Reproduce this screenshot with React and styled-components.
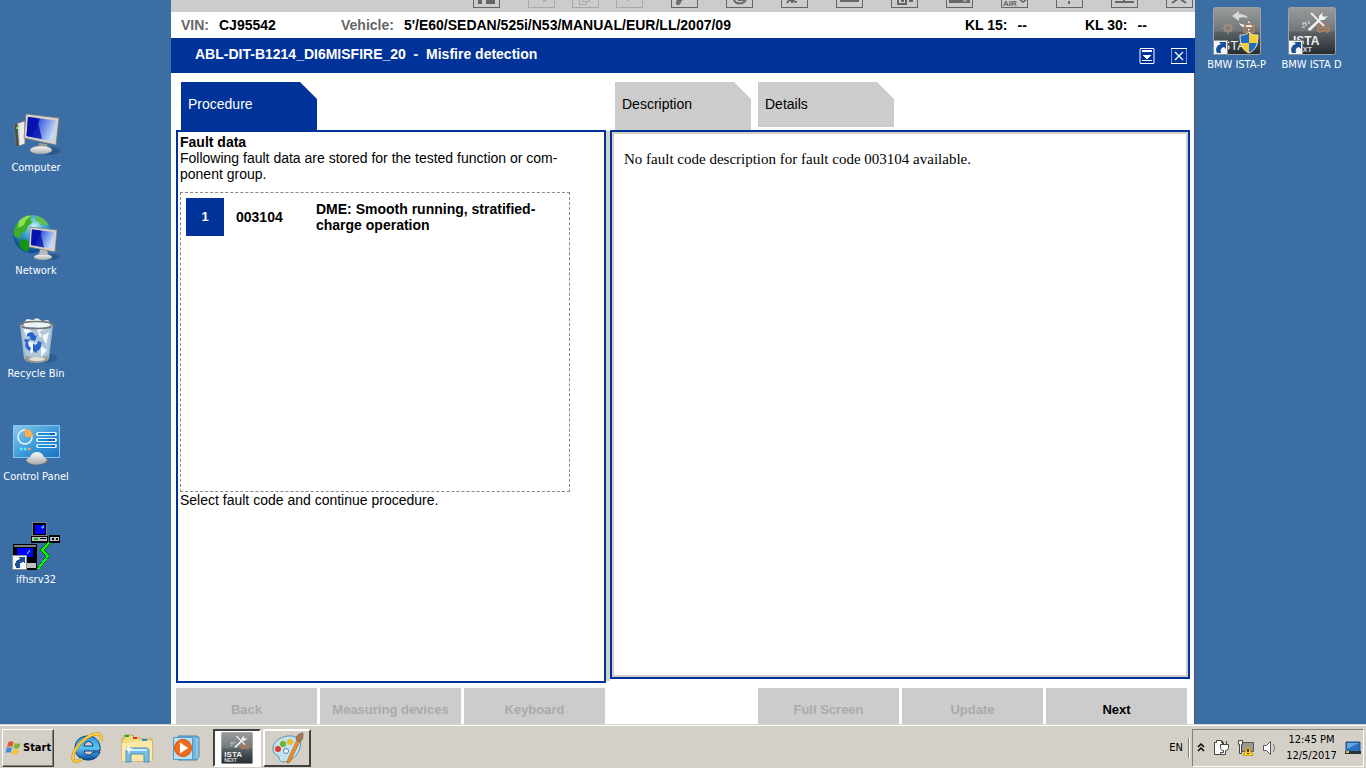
import React, { useState } from 'react';
import styled, { createGlobalStyle } from 'styled-components';

const GlobalStyle = createGlobalStyle`
  * {
    box-sizing: border-box;
  }
  body {
    margin: 0;
    background-color: #3a6ea5;
  }
  button {
    margin: 0;
    padding: 0;
    border: none;
    background: none;
    font: inherit;
    color: inherit;
    cursor: pointer;
  }
  svg {
    display: block;
    flex-shrink: 0;
  }
`;

const Screen = styled.div`
  display: flex;
  flex-direction: column;
  min-height: 100vh;
  background-color: #3a6ea5;
`;

const Desktop = styled.div`
  flex-grow: 1;
  display: grid;
  grid-template-columns: 171px 1fr 171px;
`;

const IconColumn = styled.nav`
  display: flex;
  flex-direction: column;
  gap: 38px;
  padding-top: 110px;
`;

const IconRow = styled.nav`
  display: flex;
  align-items: flex-start;
  padding: 7px 4px;
`;

const Shortcut = styled.button`
  display: flex;
  flex-direction: column;
  align-items: center;
  gap: 3px;
  width: ${({ $wide }) => ($wide ? '75px' : '72px')};
  color: white;
  font-family: 'DejaVu Sans Condensed', 'DejaVu Sans', sans-serif;
  font-size: 11px;
  line-height: 14px;
  white-space: nowrap;
`;

const Window = styled.main`
  display: flex;
  flex-direction: column;
  min-width: 0;
  background-color: white;
  font-family: 'Liberation Sans', Arial, sans-serif;
  font-size: 14px;
  line-height: 16px;
  color: black;
`;

const Toolbar = styled.div`
  display: flex;
  justify-content: flex-end;
  gap: 28px;
  height: 12px;
  padding-right: 2px;
  background-color: #cccccc;
`;

const ToolGroup = styled.div`
  display: flex;
  gap: 17px;
`;

const ToolButton = styled.button`
  width: 27px;
  height: 8px;
  border: 1px solid ${({ disabled }) => (disabled ? '#aaaaaa' : '#666666')};
  border-top: none;
  color: ${({ disabled }) => (disabled ? '#aaaaaa' : '#666666')};
`;

const InfoBar = styled.dl`
  display: flex;
  margin: 0;
  height: 26px;
  padding-left: 10px;
  align-items: center;
  font-weight: bold;
`;

const InfoItem = styled.div`
  display: flex;
  gap: 10px;
  width: ${({ $width }) => $width || 'auto'};
  flex-grow: ${({ $grow }) => ($grow ? 1 : 0)};
  white-space: nowrap;
`;

const InfoLabel = styled.dt`
  color: ${({ $dark }) => ($dark ? 'black' : '#666666')};
`;

const InfoValue = styled.dd`
  margin: 0;
`;

const TitleBar = styled.header`
  display: flex;
  align-items: center;
  height: 35px;
  padding: 0 8px 0 24px;
  background-color: #003399;
  color: white;
`;

const Title = styled.h1`
  flex-grow: 1;
  margin: 0;
  padding-bottom: 4px;
  font-size: 14px;
  white-space: pre;
`;

const TitleButtons = styled.div`
  display: flex;
  gap: 16px;
`;

const Body = styled.div`
  flex-grow: 1;
  display: flex;
  flex-direction: column;
  padding: 9px 4px 0 5px;
  border-right: 1px solid #555555;
`;

const Panels = styled.div`
  flex-grow: 1;
  display: grid;
  grid-template-columns: 430fr 4px 580fr;
`;

const Pane = styled.section`
  display: flex;
  flex-direction: column;
  min-width: 0;
  padding-bottom: ${({ $short }) => ($short ? '4px' : '0')};
`;

const Splitter = styled.div`
  margin: 49px 0 2px;
  background-color: #d4d0c8;
`;

const Tabs = styled.div`
  display: flex;
  align-items: flex-start;
  gap: 7px;
  height: 48px;
  padding-left: 5px;
`;

const Tab = styled.button`
  width: 136px;
  height: ${({ $raised }) => ($raised ? '45px' : '48px')};
  padding: 14px 7px;
  display: flex;
  align-items: flex-start;
  background-color: ${({ $active }) => ($active ? '#003399' : '#cccccc')};
  color: ${({ $active }) => ($active ? 'white' : 'black')};
  clip-path: polygon(0 0, calc(100% - 17px) 0, 100% 17px, 100% 100%, 0 100%);
`;

const FaultPanel = styled.div`
  flex-grow: 1;
  padding: 2px;
  border: 2px solid #003399;
`;

const Heading = styled.h2`
  margin: 0;
  font-size: 14px;
`;

const Paragraph = styled.p`
  margin: 0;
`;

const FaultBox = styled.div`
  max-width: 390px;
  min-height: 300px;
  margin-top: 10px;
  padding: 5px;
  border: 1px dashed #888888;
`;

const FaultTable = styled.table`
  border-collapse: collapse;
  font-weight: bold;

  td {
    padding: 0;
  }
`;

const FaultCell = styled.td`
  width: ${({ $width }) => $width || 'auto'};
`;

const FaultNumber = styled.button`
  display: block;
  width: 38px;
  height: 38px;
  background-color: #003399;
  color: white;
  font-size: 13px;
`;

const DescriptionPanel = styled.div`
  flex-grow: 1;
  padding: 16px 12px;
  border: 2px solid #003399;
  box-shadow: inset 0 0 0 2px #d4d0c8;
  font-family: 'Liberation Serif', 'Times New Roman', serif;
  font-size: 15px;
  line-height: 22px;
`;

const ActionBar = styled.div`
  display: grid;
  grid-template-columns: repeat(3, 1fr) 147px repeat(3, 1fr);
  gap: 3px;
  padding: 5px 3px 0 0;
`;

const ActionButton = styled.button`
  height: 36px;
  padding-top: 8px;
  background-color: #cccccc;
  color: black;
  font-size: 13px;
  font-weight: bold;

  &:disabled {
    color: #aaaaaa;
  }
`;

const Taskbar = styled.footer`
  display: flex;
  align-items: center;
  height: 44px;
  padding: 2px 2px 0;
  border-top: 1px solid #d4d0c8;
  box-shadow: inset 0 1px 0 white;
  background-color: #d4d0c8;
  font-family: 'DejaVu Sans Condensed', 'DejaVu Sans', sans-serif;
  font-size: 11px;
  color: black;
`;

const StartButton = styled.button`
  display: flex;
  align-items: center;
  gap: 1px;
  width: 52px;
  height: 38px;
  padding: 0 2px;
  border: 1px solid;
  border-color: white #404040 #404040 white;
  box-shadow: inset -1px -1px 0 #808080;
  font-weight: bold;
`;

const QuickLaunch = styled.div`
  display: flex;
  gap: 2px;
  padding-left: 9px;
`;

const QuickButton = styled.button`
  display: flex;
  align-items: center;
  justify-content: center;
  width: 48px;
  height: 38px;
`;

const TaskButton = styled(QuickButton)`
  border: 2px solid;
  border-color: ${({ $pressed }) =>
    $pressed ? '#404040 white white #404040' : 'white #404040 #404040 white'};
  background-color: ${({ $pressed }) => ($pressed ? 'white' : 'transparent')};
`;

const Language = styled.button`
  margin-left: auto;
  height: 20px;
  padding-right: 5px;
  border-right: 1px solid #808080;
  box-shadow: 1px 0 0 white;
`;

const Tray = styled.div`
  display: flex;
  align-items: center;
  gap: 8px;
  width: 172px;
  height: 38px;
  margin-left: 3px;
  padding: 0 2px 0 4px;
  border: 1px solid;
  border-color: #808080 white white #808080;
`;

const Clock = styled.time`
  flex-grow: 1;
  text-align: center;
  line-height: 16px;
  white-space: nowrap;
`;

const TrayIcons = styled.div`
  display: flex;
  align-items: center;
  gap: 8px;
`;

/* desktop icons */

const ArrowBadge = () => (
  <g>
    <path d="M0.5 33.5h14v14h-14z" fill="#f4f6f8" stroke="#8b9199" />
    <path d="M4 46c-2-4-.5-8 4-9l-2-2h7v7l-2-2c-3 .5-4 2.500-3 6z" fill="#1b4f96" />
  </g>
);

const ComputerIcon = () => (
  <svg width="48" height="48" viewBox="0 0 48 48" aria-hidden="true">
    <defs>
      <linearGradient id="scr" x1="0" x2="1" y1="0" y2="0.4">
        <stop offset="0" stopColor="#0713a8" />
        <stop offset="0.4" stopColor="#0a16c8" />
        <stop offset="0.45" stopColor="#3f62dc" />
        <stop offset="1" stopColor="#c4d8fa" />
      </linearGradient>
      <linearGradient id="met" x1="0" x2="0" y1="0" y2="1">
        <stop offset="0" stopColor="#fafafa" />
        <stop offset="1" stopColor="#aaaaaa" />
      </linearGradient>
    </defs>
    <ellipse cx="36" cy="41" rx="12" ry="4" fill="#234b79" opacity="0.6" />
    <path d="M2.500 14L13 11v23L4 36.500z" fill="#d9d9d7" stroke="#777" strokeWidth=".7" />
    <path d="M2.500 14l3-.7L7 36l-3 .5z" fill="#4c504d" />
    <path d="M4 17h2v2H4z" fill="#61e41c" />
    <path d="M9 13v22M11 12v22" stroke="#fff" />
    <path d="M27 33l8 1 1 5h-10z" fill="#999" />
    <ellipse cx="29" cy="40" rx="11" ry="4" fill="url(#met)" stroke="#999" strokeWidth=".5" />
    <path d="M14 4l33 4-3 27-32-7z" fill="#d6d2c7" stroke="#777" strokeWidth=".7" />
    <path d="M16 7l28 3.500-2.500 21.500-27-6z" fill="url(#scr)" />
    <path d="M16 7l9 1 5 21-15.500-3z" fill="#0611ac" opacity=".8" />
  </svg>
);

const NetworkIcon = () => (
  <svg width="48" height="48" viewBox="0 0 48 48" aria-hidden="true">
    <defs>
      <radialGradient id="globe" cx=".55" cy=".3" r=".7">
        <stop offset="0" stopColor="#c9f3ff" />
        <stop offset=".35" stopColor="#43b2dd" />
        <stop offset="1" stopColor="#07448f" />
      </radialGradient>
    </defs>
    <circle cx="20" cy="21" r="19" fill="url(#globe)" />
    <path d="M4 12C9 5 14 2 20 2l-2 5 3 2-5 4-2 5-4 2-3 6-5-3c-1-4 0-8 2-11z" fill="#3eae29" />
    <path d="M7 8c4-4 9-6 12-5l-5 4-2 5-6 3z" fill="#91de52" />
    <path d="M24 3c6 1 11 5 13 10l-5-2-3 2-2-4-4-1z" fill="#66bf49" />
    <path d="M9 26l6 1 3 5-2 7c-5-1-9-5-9-8z" fill="#159416" />
    <ellipse cx="39" cy="44" rx="9" ry="3" fill="#234b79" opacity=".6" />
    <ellipse cx="31" cy="44" rx="9" ry="3" fill="url(#met)" />
    <path d="M28 36h7l1 6h-9z" fill="#bbb" />
    <path d="M18 14l27 3-2 22-26-5z" fill="#d6d2c7" stroke="#777" strokeWidth=".7" />
    <path d="M20 16.500l22.500 2.500-1.500 17-22-4z" fill="url(#scr)" />
    <path d="M20 16.500l8 1 4 17-13-2.500z" fill="#0611ac" opacity=".8" />
  </svg>
);

const RecycleIcon = () => (
  <svg width="48" height="48" viewBox="0 0 48 48" aria-hidden="true">
    <ellipse cx="34" cy="42" rx="11" ry="5" fill="#234b79" opacity=".5" />
    <path d="M8 9l4 33c1 5 24 5 25 0l4-33z" fill="#bdd0df" opacity=".9" />
    <path d="M11 7l4-4 6 1 4-2 5 3 6-1 3 4-4 3H13z" fill="#eef3f6" />
    <path d="M11 12l9 3-5 7zM24 10l10 2-6 10zM16 25l11 3-8 10zM30 20l7-4-3 13zM29 30l6 4-6 7z" fill="#f3f8fb" />
    <path d="M20 15l5 7-8 2zM34 12l-4 7-3-3zM26 29l4-5 4 4z" fill="#8fa8bb" opacity=".6" />
    <path d="M12 39c5 3 20 3 25 0l-1 5c-3 4-20 4-23 0z" fill="#9c9a96" />
    <ellipse cx="25" cy="43" rx="8" ry="2" fill="#e2dfd8" />
    <ellipse cx="24.500" cy="9" rx="17" ry="3.500" fill="none" stroke="#717474" strokeWidth="1.500" />
    <path d="M9 9l4 33M40 9l-4 33" stroke="#9fb5c6" />
    <g fill="#2862c9">
      <path d="M15 18c3-3 7-2 8 2l2-1-2 6-6-2 2-1c-1-2-3-2-4-1z" />
      <path d="M13 23l5 1-2 2c0 3 1 5 3 6l-1 3c-4-2-6-5-4-9l-2-1z" />
      <path d="M21 35v-8l2 2c2-1 3-2 3-4l3 1c1 5-1 8-4 9l-1 2z" />
    </g>
  </svg>
);

const ControlPanelIcon = () => (
  <svg width="48" height="48" viewBox="0 0 48 48" aria-hidden="true">
    <defs>
      <linearGradient id="cp" x1="0" x2="1" y1="0" y2="1">
        <stop offset="0" stopColor="#8bc9ee" />
        <stop offset=".6" stopColor="#3593d6" />
        <stop offset="1" stopColor="#1d70bf" />
      </linearGradient>
    </defs>
    <path d="M1.500 6.500h46v32h-46z" fill="url(#cp)" stroke="#82c9f1" />
    <circle cx="13" cy="18" r="7" fill="none" stroke="#eaf8ff" strokeWidth="1.500" />
    <path d="M13 18v-8a8 8 0 018 8z" fill="#ffad47" />
    <g strokeLinecap="round" strokeWidth="4" stroke="#e1f5ff">
      <path d="M26 15h17M26 21h17M26 27h17" />
    </g>
    <g strokeWidth="2" stroke="#168ddb">
      <path d="M26 15h17M26 21h17M26 27h17" />
    </g>
    <path d="M38 15h5M35 21h8M40 27h3" stroke="#1c5ea6" strokeWidth="2" />
    <circle cx="9" cy="30" r="1.500" fill="#57efff" />
    <circle cx="13" cy="30" r="1.500" fill="#57efff" />
    <circle cx="17" cy="30" r="1.500" fill="#ffa13d" />
    <ellipse cx="25" cy="42" rx="11" ry="4" fill="#777" />
    <path d="M14 41c2-2 4-2 5-5 3-4 9-4 12 0 1 3 3 3 4 5-4 6-17 6-21 0z" fill="url(#met)" />
  </svg>
);

const IfhIcon = () => (
  <svg width="48" height="48" viewBox="0 0 48 48" aria-hidden="true" shapeRendering="crispEdges">
    <path d="M20 0h15v15H20z" fill="#808080" />
    <path d="M21 1h13v12H21z" fill="#000" />
    <path d="M23 3h10v9H23z" fill="#0000ff" />
    <path d="M19 14h17v7H19z" fill="#000" />
    <path d="M20 15h15v4H20z" fill="#c0c0c0" />
    <path d="M22 16h4v2h-4z" fill="#00bb00" />
    <path d="M28 16h6v1h-6z" fill="#000" />
    <path d="M37 13h11v8H37z" fill="#000" />
    <path d="M38 15h9v4h-9z" fill="#c0c0c0" />
    <path d="M40 16h2v2h-2zM44 16h2v2h-2z" fill="#000" />
    <path d="M1 22h24v26H14V38H1z" fill="#000" />
    <path d="M2 23h22v2H2z" fill="#808080" />
    <path d="M5 26h16v9H5z" fill="#0000ff" />
    <path d="M15 30l3-2v2l-3 2zM29 5l3-2v2l-2 2z" fill="#18baff" />
    <path d="M15 41h9v5h-9z" fill="#c0c0c0" />
    <path d="M37 21l-7 7 6 6-10 13" fill="none" stroke="#00550a" strokeWidth="3" />
    <path d="M37 21l-7 7 6 6-10 13" fill="none" stroke="#00ff00" strokeWidth="2" />
    <ArrowBadge />
  </svg>
);

const ToolsGlyph = () => (
  <g>
    <g fill="none" stroke="#a67c60" strokeWidth="2">
      <path d="M30 24v-4l2-3h7l2 3v4zM30 21h11" />
      <path d="M32 26v-2M39 26v-2" />
    </g>
    <path d="M23 6l3 3M26 9l10 10" stroke="#e6e8e8" strokeWidth="2" />
    <path d="M35 5l-4 4v3l-10 9c-2 1 0 4 2 2l10-10h3l4-4-4 1-2-2z" fill="#f2f4f4" />
    <path d="M15 18v-2h3v3M21 14v3M14 20h3" fill="none" stroke="#c6cacc" strokeWidth="1.500" />
  </g>
);

const IstaIcon = ({ variant, size = 48 }) => (
  <svg width={size} height={size} viewBox="0 0 48 48" aria-hidden="true">
    <defs>
      <linearGradient id="ista" x1="0" x2="0" y1="0" y2="1">
        <stop offset="0" stopColor="#9a9b9a" />
        <stop offset=".5" stopColor="#70787b" />
        <stop offset=".52" stopColor="#596267" />
        <stop offset="1" stopColor="#242c30" />
      </linearGradient>
    </defs>
    <rect x=".5" y=".5" width="47" height="47" rx="2" fill="url(#ista)" stroke="#a0a2a2" />
    {variant === 'p' ? (
      <g>
        <path d="M19 9l7-5v3c4 0 7 1 9 4-4-1-6-1-9 0v3z" fill="#d8dada" />
        <path d="M42 19l-7 5v-3c-4 0-7-1-9-5 4 2 6 2 9 1v-3z" fill="#f2f3f3" />
        <circle cx="15" cy="21" r="3" fill="none" stroke="#a08a78" strokeWidth="2" />
        <path d="M15 15v2M15 25v2M9 21h2M19 21h2M11 17l1 1M19 17l-1 1M11 25l1-1M19 25l-1-1" stroke="#a08a78" strokeWidth="1.500" />
        <path d="M31 25v-4l2-4h6l2 4v4zM31 21h10" fill="none" stroke="#a67c60" strokeWidth="2" />
        <text x="5" y="43" fontFamily="Liberation Sans" fontSize="13" fill="#eee">ISTA</text>
        <path d="M36 25c3 3 6 3 9 3 0 9-2 15-9 18-7-3-9-9-9-18 3 0 6 0 9-3z" fill="#f7cd38" />
        <path d="M36 25v11h-9c0-3-.5-5 0-8 3 0 6 0 9-3zM36 36h9c-1 5-4 8-9 10z" fill="#2369c7" />
        <path d="M36 25c3 3 6 3 9 3 0 9-2 15-9 18-7-3-9-9-9-18 3 0 6 0 9-3z" fill="none" stroke="#eee7b4" />
      </g>
    ) : (
      <g>
        <ToolsGlyph />
        <text x="5" y="38" fontFamily="Liberation Sans" fontSize="12" fontWeight="bold" fill="#eee">ISTA</text>
        <text x="5" y="45" fontFamily="Liberation Sans" fontSize="7" fontWeight="bold" fill="#ddd">NEXT</text>
      </g>
    )}
    {size === 48 && <ArrowBadge />}
  </svg>
);

/* toolbar glyphs, only their lower part reaches into the window */

const ToolGlyph = ({ d, children }) => (
  <svg width="25" height="7" viewBox="0 0 25 7" fill="none" stroke="currentColor" strokeWidth="2" aria-hidden="true">
    {d && <path d={d} />}
    {children}
  </svg>
);

const undoGroup = [
  { name: 'Undo', d: 'M17 -1l-3 3' },
  { name: 'Copy' },
  { name: 'Redo', d: 'M11 -1v2' },
];

const tools = [
  { name: 'Tools', d: 'M5 3c0-3 3-3 3-1s-3 3-3 1zM8 1l4-3' },
  { name: 'Refresh', d: 'M7 -1c0 6 12 6 12-1M11 0h5v-1' },
  { name: 'Measure', d: 'M5 3l3-4 2 3 4-4M11 1l4 1' },
  { name: 'Workshop', d: 'M3 1h19' },
  { name: 'Identification' },
  { name: 'Display' },
  { name: 'Air' },
  { name: 'Help', d: 'M12 1v3' },
  { name: 'Minimise', d: 'M3 2h19M12 -1v3' },
  { name: 'Close application', d: 'M5 3l7-5 7 5' },
];

const renderTool = (tool) => {
  if (tool.name === 'Copy') {
    return (
      <ToolGlyph>
        <path d="M6.500 -1v5.500h7v-3M9.500 -1v2.500h7v-3" strokeWidth="1" />
      </ToolGlyph>
    );
  }
  if (tool.name === 'Identification') {
    return (
      <ToolGlyph>
        <path d="M6 -1v5h8v-5M17 1h4" />
        <path d="M9 0h3v2H9z" fill="currentColor" stroke="none" />
      </ToolGlyph>
    );
  }
  if (tool.name === 'Display') {
    return (
      <ToolGlyph>
        <path d="M2 -1h21v4H2z" fill="currentColor" stroke="none" />
        <path d="M16 1h4" strokeWidth="1" stroke="#ccc" />
      </ToolGlyph>
    );
  }
  if (tool.name === 'Air') {
    return (
      <ToolGlyph>
        <text x="1" y="6" fontFamily="Liberation Sans" fontSize="8" fontWeight="bold" fill="currentColor" stroke="none">
          AIR
        </text>
        <path d="M18 0l3 2 3-2" strokeWidth="1.500" />
      </ToolGlyph>
    );
  }
  return <ToolGlyph d={tool.d} />;
};

const shortcuts = [
  { name: 'Computer', icon: <ComputerIcon /> },
  { name: 'Network', icon: <NetworkIcon /> },
  { name: 'Recycle Bin', icon: <RecycleIcon /> },
  { name: 'Control Panel', icon: <ControlPanelIcon /> },
  { name: 'ifhsrv32', icon: <IfhIcon /> },
];

const faults = [
  { code: '003104', lines: ['DME: Smooth running, stratified-', 'charge operation'] },
];

const FlagIcon = () => (
  <svg width="17" height="16" viewBox="0 0 16 16" aria-hidden="true">
    <path d="M3 2c2-1 3-1 5 0L7 7C5 6 3 6 1.500 7z" fill="#e6532b" />
    <path d="M9 3c2 1 4 1 6 0l-1.500 5c-2 1-4 1-5.500 0z" fill="#7db832" />
    <path d="M1 8c2-1 4-1 5.500 0L5 13c-2-1-3-1-5 0z" fill="#3b8fd4" />
    <path d="M7.500 9c2 1 4 1 6 0L12 14c-2 1-4 1-6 0z" fill="#f8c332" />
  </svg>
);

const ExplorerIcon = () => (
  <svg width="32" height="32" viewBox="0 0 32 32" aria-hidden="true">
    <defs>
      <linearGradient id="ie" x1="0" x2="0" y1="0" y2="1">
        <stop offset="0" stopColor="#2f8fdc" />
        <stop offset=".5" stopColor="#5cc4f4" />
        <stop offset="1" stopColor="#064a9f" />
      </linearGradient>
    </defs>
    <path
      d="M17 4c8 0 13 6 12 15H13c1 5 7 5 9 1h7c-2 5-6 8-12 8C9 28 4 23 4 16 4 9 9 4 17 4zm-4 10h9c-1-6-8-6-9 0z"
      fill="url(#ie)"
      stroke="#053c80"
      strokeWidth="1"
      fillRule="evenodd"
    />
    <path d="M30 9c1-5-1-8-5-7C16 3 4 14 2 24c-1 6 3 7 9 3" fill="none" stroke="#c98d10" strokeWidth="3" />
    <path d="M30 9c1-5-1-8-5-7C16 3 4 14 2 24c-1 6 3 7 9 3" fill="none" stroke="#f9cf3c" strokeWidth="2" />
  </svg>
);

const FolderIcon = () => (
  <svg width="34" height="32" viewBox="0 0 34 32" aria-hidden="true">
    <path d="M2 7h2V3h9l1 3h6l1 1h11v22H2z" fill="#f4d981" stroke="#c6a44b" />
    <path d="M5 3h4v2H5z" fill="#12a62a" />
    <path d="M13 5h4v2h-4z" fill="#dd3321" />
    <path d="M22 7h5v2h-5z" fill="#258bd7" />
    <path d="M2 11c8 0 10-2 16-2h14v20H2z" fill="#fbe9a5" />
    <path d="M6 30V19c0-2 1-3 3-3h17c2 0 3 1 3 3v11h-5v-8H11v8z" fill="#76bce3" stroke="#4c91bd" />
    <path d="M7 18h20" stroke="#c8edff" strokeWidth="2" />
    <path d="M9 12l1 4 4 1-4 1-1 5-1-5-4-1 4-1z" fill="white" opacity=".9" />
  </svg>
);

const MediaIcon = () => (
  <svg width="32" height="32" viewBox="0 0 32 32" aria-hidden="true">
    <path d="M7 4h19v24H7z" fill="#75b6dc" stroke="#3c86b3" />
    <path d="M25 5h3v20l-3 3" fill="#93c7e4" stroke="#438ab6" />
    <path d="M2.500 5.500h19v22h-19z" fill="#b8dff4" stroke="#519ac6" />
    <circle cx="12" cy="16" r="8.500" fill="#f26a1b" stroke="#d85308" />
    <path d="M9 10.500l8 5.500-8 5.500z" fill="white" />
  </svg>
);

const PaintIcon = () => (
  <svg width="34" height="34" viewBox="0 0 34 34" aria-hidden="true">
    <path d="M3 19C2 10 12 4 22 5c7 1 10 6 8 12-2 7-8 13-16 14-6 0-4-5-7-7-2-1-4-2-4-5z" fill="#c2e1ed" stroke="#6290a8" />
    <circle cx="8" cy="18" r="3" fill="#e33b30" />
    <circle cx="13" cy="13" r="3" fill="#64b72b" />
    <circle cx="20" cy="11" r="3" fill="#f2b91d" />
    <circle cx="16" cy="20" r="2.500" fill="#eef7f9" stroke="#538aa4" />
    <path d="M27 9l3 1-10 21-3 1 1-4z" fill="#ee8d2b" stroke="#a75715" strokeWidth=".6" />
    <path d="M26 8c0-4 4-6 7-6 0 4 0 8-4 9z" fill="#a57b4d" stroke="#6b4726" strokeWidth=".5" />
  </svg>
);

const RollIcon = () => (
  <svg width="16" height="16" viewBox="0 0 16 16" aria-hidden="true" shapeRendering="crispEdges">
    <path d="M0 1h2v14H0zM14 1h2v14h-2z" fill="#8099cc" />
    <path d="M1 0h14v1H1zM1 15h14v1H1zM3 2h10v2H3zM4 7h8v1H4zM5 8h6v1H5zM6 9h4v1H6zM7 10h2v1H7zM3 12h10v1H3z" fill="white" />
  </svg>
);

const CloseIcon = () => (
  <svg width="16" height="16" viewBox="0 0 16 16" aria-hidden="true">
    <path d="M0 1h1v14H0zM15 1h1v14h-1z" fill="#8099cc" />
    <path d="M0 0h16v1H0zM0 15h16v1H0z" fill="white" />
    <path d="M4 4l8 8M12 4l-8 8" stroke="white" strokeWidth="1.200" />
  </svg>
);

function FaultRow({ fault, index, selected, onSelect }) {
  return (
    <tr>
      <FaultCell $width="50px">
        <FaultNumber aria-pressed={selected} onClick={() => onSelect(index)}>
          {index + 1}
        </FaultNumber>
      </FaultCell>
      <FaultCell $width="80px">{fault.code}</FaultCell>
      <FaultCell>
        {fault.lines[0]}
        <br />
        {fault.lines[1]}
      </FaultCell>
    </tr>
  );
}

function DiagnosisWindow() {
  const [selected, setSelected] = useState(0);

  return (
    <Window>
      <Toolbar>
        <ToolButton aria-label="Save">
          <ToolGlyph>
            <path d="M4 0h4v4H4zM12 0h9v4h-9z" fill="currentColor" stroke="none" />
          </ToolGlyph>
        </ToolButton>
        <ToolGroup>
          {undoGroup.map((tool) => (
            <ToolButton key={tool.name} aria-label={tool.name} disabled>
              {renderTool(tool)}
            </ToolButton>
          ))}
        </ToolGroup>
        {tools.map((tool) => (
          <ToolButton key={tool.name} aria-label={tool.name}>
            {renderTool(tool)}
          </ToolButton>
        ))}
      </Toolbar>
      <InfoBar>
        <InfoItem $width="160px">
          <InfoLabel>VIN:</InfoLabel>
          <InfoValue>CJ95542</InfoValue>
        </InfoItem>
        <InfoItem $grow>
          <InfoLabel>Vehicle:</InfoLabel>
          <InfoValue>5'/E60/SEDAN/525i/N53/MANUAL/EUR/LL/2007/09</InfoValue>
        </InfoItem>
        <InfoItem $width="120px">
          <InfoLabel $dark>KL 15:</InfoLabel>
          <InfoValue>--</InfoValue>
        </InfoItem>
        <InfoItem $width="110px">
          <InfoLabel $dark>KL 30:</InfoLabel>
          <InfoValue>--</InfoValue>
        </InfoItem>
      </InfoBar>
      <TitleBar>
        <Title>{'ABL-DIT-B1214_DI6MISFIRE_20  -  Misfire detection'}</Title>
        <TitleButtons>
          <button aria-label="Roll up">
            <RollIcon />
          </button>
          <button aria-label="Close">
            <CloseIcon />
          </button>
        </TitleButtons>
      </TitleBar>
      <Body>
        <Panels>
          <Pane>
            <Tabs>
              <Tab $active>Procedure</Tab>
            </Tabs>
            <FaultPanel>
              <Heading>Fault data</Heading>
              <Paragraph>
                Following fault data are stored for the tested function or com-
                <br />
                ponent group.
              </Paragraph>
              <FaultBox>
                <FaultTable>
                  <tbody>
                    {faults.map((fault, index) => (
                      <FaultRow
                        key={fault.code}
                        fault={fault}
                        index={index}
                        selected={selected === index}
                        onSelect={setSelected}
                      />
                    ))}
                  </tbody>
                </FaultTable>
              </FaultBox>
              <Paragraph>Select fault code and continue procedure.</Paragraph>
            </FaultPanel>
          </Pane>
          <Splitter />
          <Pane $short>
            <Tabs>
              <Tab>Description</Tab>
              <Tab $raised>Details</Tab>
            </Tabs>
            <DescriptionPanel>
              No fault code description for fault code 003104 available.
            </DescriptionPanel>
          </Pane>
        </Panels>
        <ActionBar>
          <ActionButton disabled>Back</ActionButton>
          <ActionButton disabled>Measuring devices</ActionButton>
          <ActionButton disabled>Keyboard</ActionButton>
          <span />
          <ActionButton disabled>Full Screen</ActionButton>
          <ActionButton disabled>Update</ActionButton>
          <ActionButton>Next</ActionButton>
        </ActionBar>
      </Body>
    </Window>
  );
}

function SystemTray() {
  return (
    <Tray>
      <TrayIcons>
        <svg width="8" height="16" viewBox="0 0 8 16" fill="none" stroke="black" strokeWidth="1.500" aria-hidden="true">
          <path d="M1 7l3-3 3 3M1 11l3-3 3 3" />
        </svg>
        <svg width="16" height="16" viewBox="0 0 16 16" fill="white" stroke="#444" aria-hidden="true">
          <path d="M1.500 2.500h2v-2h5v2h2v12h-9z" />
          <path d="M9.500 1v4M13.500 1v4" />
          <path d="M7.500 4.500h8v3c0 2-1 3-3 3v4h-5v-2h3v-2c-2 0-3-1-3-3z" />
        </svg>
        <svg width="17" height="16" viewBox="0 0 17 16" aria-hidden="true">
          <path d="M4.500 2.500h12v9h-12z" fill="#9a9a9a" stroke="#555" />
          <path d="M1.500 .5h4v4h-1v9h-2v-9h-1z" fill="#f4f4f4" stroke="#444" />
          <path d="M11 6l5 9.500H6z" fill="#ffd21e" stroke="#b58b00" strokeWidth=".7" />
          <path d="M11 9v3M11 13v1" stroke="black" strokeWidth="1.500" />
        </svg>
        <svg width="16" height="16" viewBox="0 0 16 16" fill="none" stroke="#555" aria-hidden="true">
          <path d="M1.500 5.500h3l4-4v13l-4-4h-3z" fill="white" />
          <path d="M11 4c2 2 2 6 0 8" stroke="#777" />
        </svg>
      </TrayIcons>
      <Clock>
        12:45 PM
        <br />
        12/5/2017
      </Clock>
      <svg width="16" height="16" viewBox="0 0 16 16" aria-label="Desktop">
        <path d="M1 2h14v10H1z" fill="#2a71bd" stroke="#164a85" />
        <path d="M2 3h12L2 9z" fill="#62a8df" />
        <path d="M0 11h16v3H0z" fill="#28323d" />
        <path d="M1 11h3v2H1z" fill="#eebb3c" />
      </svg>
    </Tray>
  );
}

function App() {
  return (
    <Screen>
      <GlobalStyle />
      <Desktop>
        <IconColumn>
          {shortcuts.map((item) => (
            <Shortcut key={item.name}>
              {item.icon}
              {item.name}
            </Shortcut>
          ))}
        </IconColumn>
        <DiagnosisWindow />
        <IconRow>
          <Shortcut $wide>
            <IstaIcon variant="p" />
            BMW ISTA-P
          </Shortcut>
          <Shortcut $wide>
            <IstaIcon variant="d" />
            BMW ISTA D
          </Shortcut>
        </IconRow>
      </Desktop>
      <Taskbar>
        <StartButton>
          <FlagIcon />
          Start
        </StartButton>
        <QuickLaunch>
          <QuickButton aria-label="Internet Explorer">
            <ExplorerIcon />
          </QuickButton>
          <QuickButton aria-label="File explorer">
            <FolderIcon />
          </QuickButton>
          <QuickButton aria-label="Media Player">
            <MediaIcon />
          </QuickButton>
          <TaskButton $pressed aria-label="ISTA">
            <IstaIcon variant="d" size={32} />
          </TaskButton>
          <TaskButton aria-label="Paint">
            <PaintIcon />
          </TaskButton>
        </QuickLaunch>
        <Language>EN</Language>
        <SystemTray />
      </Taskbar>
    </Screen>
  );
}

export default App;
